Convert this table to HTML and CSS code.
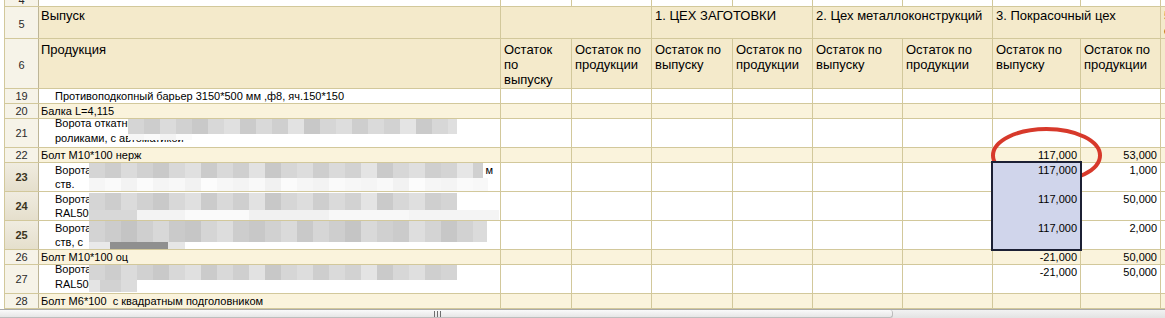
FILE: index.html
```html
<!DOCTYPE html>
<html lang="ru">
<head>
<meta charset="utf-8">
<title>Остатки</title>
<link rel="stylesheet" href="styles.css">
</head>
<body>
<div class="page">
  <div class="sheet">
    <!-- row 4 -->
    <div class="c num r4"><span>4</span></div>
    <div class="c"></div><div class="c"></div><div class="c"></div><div class="c"></div><div class="c"></div>
    <div class="c"></div><div class="c"></div><div class="c"></div><div class="c"></div><div class="c"></div>

    <!-- row 5 -->
    <div class="c num hn">5</div>
    <div class="c h h5 first">Выпуск</div>
    <div class="c h h5 s2"></div>
    <div class="c h h5 s2">1. ЦЕХ ЗАГОТОВКИ</div>
    <div class="c h h5 s2">2. Цех металлоконструкций</div>
    <div class="c h h5 s2">3. Покрасочный цех</div>
    <div class="c h h5">5. Цех сборки</div>

    <!-- row 6 -->
    <div class="c num hn">6</div>
    <div class="c h h6 first">Продукция</div>
    <div class="c h h6">Остаток по выпуску</div>
    <div class="c h h6">Остаток по продукции</div>
    <div class="c h h6">Остаток по выпуску</div>
    <div class="c h h6">Остаток по продукции</div>
    <div class="c h h6">Остаток по выпуску</div>
    <div class="c h h6">Остаток по продукции</div>
    <div class="c h h6">Остаток по выпуску</div>
    <div class="c h h6">Остаток по продукции</div>
    <div class="c h h6"></div>

    <!-- row 19 -->
    <div class="c num">19</div>
    <div class="c it">Противоподкопный барьер 3150*500 мм ,ф8, яч.150*150</div>
    <div class="c"></div><div class="c"></div><div class="c"></div><div class="c"></div><div class="c"></div>
    <div class="c"></div><div class="c"></div><div class="c"></div><div class="c"></div>

    <!-- row 20 -->
    <div class="c num">20</div>
    <div class="c g t">Балка L=4,115</div>
    <div class="c g"></div><div class="c g"></div><div class="c g"></div><div class="c g"></div><div class="c g"></div>
    <div class="c g"></div><div class="c g"></div><div class="c g"></div><div class="c g"></div>

    <!-- row 21 -->
    <div class="c num">21</div>
    <div class="c it up">
      <div class="ln">Ворота откатные</div>
      <div class="ln">роликами, с автоматикой</div>
      <i class="mos mos-a m21a"></i>
      <i class="mos mos-l m21b"></i>
    </div>
    <div class="c"></div><div class="c"></div><div class="c"></div><div class="c"></div><div class="c"></div>
    <div class="c"></div><div class="c"></div><div class="c"></div><div class="c"></div>

    <!-- row 22 -->
    <div class="c num">22</div>
    <div class="c g t">Болт М10*100 нерж</div>
    <div class="c g"></div><div class="c g"></div><div class="c g"></div><div class="c g"></div><div class="c g"></div><div class="c g"></div>
    <div class="c g v">117,000</div>
    <div class="c g v">53,000</div>
    <div class="c g"></div>

    <!-- row 23 -->
    <div class="c num sel">23</div>
    <div class="c it">
      <div class="ln split"><span>Ворота</span><span>м</span></div>
      <div class="ln">ств.</div>
      <i class="mos mos-a m23a"></i>
      <i class="mos mos-l m23b"></i>
    </div>
    <div class="c"></div><div class="c"></div><div class="c"></div><div class="c"></div><div class="c"></div><div class="c"></div>
    <div class="selblock">
      <div class="sv">117,000</div>
      <div class="sv">117,000</div>
      <div class="sv">117,000</div>
    </div>
    <div class="c v">1,000</div>
    <div class="c"></div>

    <!-- row 24 -->
    <div class="c num sel">24</div>
    <div class="c it">
      <div class="ln">Ворота</div>
      <div class="ln">RAL5005</div>
      <i class="mos mos-a m24a"></i>
      <i class="mos mos-l m24b"></i>
    </div>
    <div class="c"></div><div class="c"></div><div class="c"></div><div class="c"></div><div class="c"></div><div class="c"></div>
    <div class="c v">50,000</div>
    <div class="c"></div>

    <!-- row 25 -->
    <div class="c num sel">25</div>
    <div class="c it">
      <div class="ln">Ворота</div>
      <div class="ln">ств, с</div>
      <i class="mos mos-d m25a"></i>
      <i class="mos m25b"></i>
    </div>
    <div class="c"></div><div class="c"></div><div class="c"></div><div class="c"></div><div class="c"></div><div class="c"></div>
    <div class="c v">2,000</div>
    <div class="c"></div>

    <!-- row 26 -->
    <div class="c num">26</div>
    <div class="c g t">Болт М10*100 оц</div>
    <div class="c g"></div><div class="c g"></div><div class="c g"></div><div class="c g"></div><div class="c g"></div><div class="c g"></div>
    <div class="c g v">-21,000</div>
    <div class="c g v">50,000</div>
    <div class="c g"></div>

    <!-- row 27 -->
    <div class="c num">27</div>
    <div class="c it up">
      <div class="ln">Ворота</div>
      <div class="ln">RAL5005</div>
      <i class="mos mos-a m27a"></i>
      <i class="mos m27b"></i>
    </div>
    <div class="c"></div><div class="c"></div><div class="c"></div><div class="c"></div><div class="c"></div><div class="c"></div>
    <div class="c v">-21,000</div>
    <div class="c v">50,000</div>
    <div class="c"></div>

    <!-- row 28 -->
    <div class="c num">28</div>
    <div class="c g t pre">Болт М6*100  с квадратным подголовником</div>
    <div class="c g"></div><div class="c g"></div><div class="c g"></div><div class="c g"></div><div class="c g"></div>
    <div class="c g"></div><div class="c g"></div><div class="c g"></div><div class="c g"></div>
  </div>

  <div class="hscroll">
    <div class="thumb">
      <svg class="grip" width="7" height="6" viewBox="0 0 7 6"><rect x="0" y="0" width="1" height="6" fill="#6f6f6f"/><rect x="3" y="0" width="1" height="6" fill="#6f6f6f"/><rect x="6" y="0" width="1" height="6" fill="#6f6f6f"/></svg>
    </div>
  </div>

  <svg class="ring" width="111" height="57" viewBox="0 0 111 57">
    <ellipse cx="55.5" cy="28.5" rx="53.5" ry="26.5" fill="none" stroke="#d7392b" stroke-width="4"/>
  </svg>
</div>
</body>
</html>
```

FILE: styles.css
```css
* { box-sizing: border-box; }

html, body {
  margin: 0;
  padding: 0;
  background: #ffffff;
}

body {
  width: 1165px;
  height: 318px;
  overflow: hidden;
  font-family: "Liberation Sans", Arial, sans-serif;
  color: #000;
}

.page {
  position: relative;
  width: 1165px;
  height: 318px;
  overflow: hidden;
  display: flex;
  flex-direction: column;
}

.sheet {
  align-self: flex-start;
  width: max-content;
  margin-left: 4px;
  display: grid;
  grid-template-columns: 33px 461px 70px 79px 80px 79px 89px 89px 87px 79px 80px;
  grid-template-rows: 6px 31px 49px 14px 14px 28px 14px 28px 28px 28px 14px 28px 14px;
  gap: 1px;
  padding: 0 0 1px 1px;
  background: #d2c89b;
}

.c {
  position: relative;
  overflow: hidden;
  white-space: nowrap;
  background: #ffffff;
  font-size: 11px;
  line-height: 14px;
}

.num {
  display: flex;
  align-items: center;
  justify-content: center;
  background: #f6f3e8;
  color: #2a2a2a;
  box-shadow: 1px 0 0 #bdb597;
}

.num.hn { padding-top: 3px; }

.r4 span { margin-top: -7px; }

.num.sel {
  background: linear-gradient(#f0ece0, #e5dfcc);
  font-weight: bold;
  color: #3a3420;
}

.h {
  background: #f4eacb;
  font-size: 13px;
  line-height: 15px;
  white-space: normal;
  padding: 1px 4px 0 3px;
}

.h.first { padding-left: 2px; }
.h6 { padding-top: 3px; }
.s2 { grid-column: span 2; }

.g { background: #faf3dc; }

.t { padding-left: 2px; }
.pre { white-space: pre; }

.it { padding-left: 16px; }
.it.up { line-height: 15px; }
.it.up .ln:first-child { margin-top: -3px; }

.split {
  display: flex;
  justify-content: space-between;
  padding-right: 7px;
}

.v {
  text-align: right;
  padding-right: 3px;
}

.selblock {
  grid-row: span 3;
  margin: -2px;
  border: 2px solid #1c2034;
  background: #d0d5eb;
  display: grid;
  grid-template-rows: 29px 29px auto;
  position: relative;
  z-index: 1;
  font-size: 11px;
  line-height: 14px;
}

.sv {
  text-align: right;
  padding-right: 3px;
}

/* pixelated blur over hidden text */
.mos {
  position: absolute;
  display: block;
}

.mos-a {
  background: linear-gradient(90deg,
    #d5d5d5 0 16px, #cdcdcd 16px 32px, #dbdbdb 32px 48px, #d1d1d1 48px 64px,
    #c9c9c9 64px 80px, #d8d8d8 80px 96px, #e0e0e0 96px 112px, #cbcbcb 112px 128px,
    #d9d9d9 128px 144px, #cfcfcf 144px 160px, #e2e2e2 160px 176px, #c8c8c8 176px 192px,
    #d6d6d6 192px 208px, #dddddd 208px 224px, #cecece 224px 240px, #dadada 240px 256px,
    #d2d2d2 256px 272px, #e4e4e4 272px 288px, #cacaca 288px 304px, #d7d7d7 304px 320px,
    #dfdfdf 320px 336px, #cfcfcf 336px 352px, #d4d4d4 352px 368px, #e6e6e6 368px 384px,
    #d0d0d0 384px 400px, #dcdcdc 400px 416px);
}

.mos-l {
  background: linear-gradient(90deg,
    #f6f6f6 0 16px, #fafafa 16px 32px, #f3f3f3 32px 48px, #fbfbfb 48px 64px,
    #f5f5f5 64px 80px, #f8f8f8 80px 96px, #f2f2f2 96px 112px, #fcfcfc 112px 128px,
    #f7f7f7 128px 144px, #f4f4f4 144px 160px, #f9f9f9 160px 176px, #f1f1f1 176px 192px,
    #fbfbfb 192px 208px, #f6f6f6 208px 224px, #f3f3f3 224px 240px, #fafafa 240px 256px,
    #f7f7f7 256px 272px, #f5f5f5 272px 288px, #f9f9f9 288px 304px, #f2f2f2 304px 320px,
    #fcfcfc 320px 336px, #f6f6f6 336px 352px, #f4f4f4 352px 368px, #fafafa 368px 384px,
    #f8f8f8 384px 400px, #f3f3f3 400px 416px);
}

.mos-d {
  background: linear-gradient(90deg,
    #d3d3d3 0 16px, #cccccc 16px 32px, #c4c4c4 32px 48px, #cfcfcf 48px 64px,
    #d8d8d8 64px 80px, #cacaca 80px 96px, #c6c6c6 96px 112px, #d5d5d5 112px 128px,
    #dddddd 128px 144px, #cdcdcd 144px 160px, #c8c8c8 160px 176px, #d1d1d1 176px 192px,
    #dadada 192px 208px, #c9c9c9 208px 224px, #d6d6d6 224px 240px, #cecece 240px 256px,
    #c5c5c5 256px 272px, #d9d9d9 272px 288px, #d0d0d0 288px 304px, #cbcbcb 304px 320px,
    #dedede 320px 336px, #d4d4d4 336px 352px, #c7c7c7 352px 368px, #d2d2d2 368px 384px,
    #dbdbdb 384px 400px, #e4e4e4 400px 416px);
}

.m21a { left: 89px; top: 0; width: 329px; height: 15px; }
.m21b { left: 89px; top: 15px; width: 64px; height: 6px; }

.m23a { left: 50px; top: 0; width: 394px; height: 15px; }
.m23b { left: 50px; top: 15px; width: 399px; height: 13px; }

.m24a { left: 50px; top: 1px; width: 368px; height: 17px; }
.m24b {
  left: 50px; top: 18px; width: 410px; height: 10px;
  background: linear-gradient(90deg, #d8d8d8 0 48px, #f3f3f3 48px 96px, #fafafa 96px 160px, #f1f1f1 160px 240px, #f8f8f8 240px 320px, #f4f4f4 320px 410px);
}

.m25a { left: 50px; top: 0; width: 398px; height: 21px; }
.m25b {
  left: 50px; top: 21px; width: 96px; height: 7px;
  background: linear-gradient(90deg, #e9e9e9 0 21px, #8f8f8f 21px 79px, #e6e6e6 79px 96px);
}

.m27a { left: 50px; top: 0; width: 368px; height: 15px; }
.m27b {
  left: 50px; top: 15px; width: 48px; height: 12px;
  background: linear-gradient(90deg, #e4e4e4 0 11px, #d2d2d2 11px 32px, #dcdcdc 32px 48px);
}

/* horizontal scrollbar */
.hscroll {
  height: 9px;
  border-top: 1px solid #a9a9a9;
  background: linear-gradient(#f2f2f2, #e3e3e3);
  display: flex;
}

.thumb {
  width: 893px;
  height: 100%;
  border: 1px solid #bdbdbd;
  border-left: none;
  border-top: none;
  border-radius: 0 3px 3px 0;
  background: linear-gradient(#fafafa, #e6e6e6);
  display: flex;
  justify-content: center;
  align-items: flex-end;
}

.grip { display: block; margin-right: 18px; }

.ring {
  position: absolute;
  left: 991px;
  top: 127px;
}
```
